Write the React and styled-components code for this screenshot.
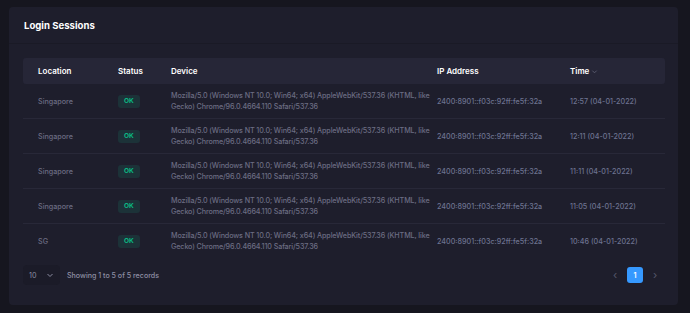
import React from "react";
import styled, { createGlobalStyle } from "styled-components";

const GlobalStyle = createGlobalStyle`
  html, body {
    margin: 0;
    padding: 0;
    background: #16161f;
  }
  body {
    font-family: Inter, "Open Sans", sans-serif;
    -webkit-font-smoothing: antialiased;
  }
`;

const sessions = [
  { location: "Singapore", time: "12:57 (04-01-2022)" },
  { location: "Singapore", time: "12:11 (04-01-2022)" },
  { location: "Singapore", time: "11:11 (04-01-2022)" },
  { location: "Singapore", time: "11:05 (04-01-2022)" },
  { location: "SG", time: "10:46 (04-01-2022)" },
];

const agent =
  "Mozilla/5.0 (Windows NT 10.0; Win64; x64) AppleWebKit/537.36 (KHTML, like Gecko) Chrome/96.0.4664.110 Safari/537.36";
const ip = "2400:8901::f03c:92ff:fe5f:32a";

export default function App() {
  return (
    <Page>
      <GlobalStyle />
      <Card>
        <CardHeader>
          <Title>Login Sessions</Title>
        </CardHeader>
        <CardBody>
          <Table>
            <colgroup>
              <col style={{ width: 95 }} />
              <col style={{ width: 53 }} />
              <col style={{ width: 266 }} />
              <col style={{ width: 133 }} />
              <col style={{ width: 95 }} />
            </colgroup>
            <thead>
              <tr>
                <Th>Location</Th>
                <Th>Status</Th>
                <Th>Device</Th>
                <Th>IP Address</Th>
                <Th>
                  Time <SortArrow viewBox="0 0 8 8">
                    <path d="M1.5 3 L4 5.5 L6.5 3" />
                  </SortArrow>
                </Th>
              </tr>
            </thead>
            <tbody>
              {sessions.map((s, i) => (
                <Row key={i}>
                  <Td>{s.location}</Td>
                  <Td>
                    <Badge>OK</Badge>
                  </Td>
                  <Td $device>{agent}</Td>
                  <Td $tone="blue">{ip}</Td>
                  <Td $tone="blue">{s.time}</Td>
                </Row>
              ))}
            </tbody>
          </Table>
          <Footer>
            <Left>
              <PageSize>
                <span>10</span>
                <Chevron viewBox="0 0 8 8">
                  <path d="M1.5 3 L4 5.5 L6.5 3" />
                </Chevron>
              </PageSize>
              <Info>Showing 1 to 5 of 5 records</Info>
            </Left>
            <Pager>
              <PageArrow>‹</PageArrow>
              <PageButton $active>1</PageButton>
              <PageArrow>›</PageArrow>
            </Pager>
          </Footer>
        </CardBody>
      </Card>
    </Page>
  );
}

const Page = styled.div`
  padding: 7px 12px 8px 9px;
`;

const Card = styled.div`
  background: #1e1e2c;
  border-radius: 4px;
`;

const CardHeader = styled.div`
  height: 36px;
  display: flex;
  align-items: center;
  padding: 0 15px;
  border-bottom: 1px solid #1a1a26;
`;

const Title = styled.h3`
  margin: 0;
  color: #ffffff;
  font-size: 9.6px;
  font-weight: 700;
`;

const CardBody = styled.div`
  padding: 14px 13px 20px 14px;
`;

const Table = styled.table`
  width: 642px;
  table-layout: fixed;
  border-collapse: collapse;
`;

const Th = styled.th`
  height: 26px;
  padding: 0 4px 0 0;
  background: #262637;
  color: #ffffff;
  font-size: 8px;
  font-weight: 600;
  text-align: left;
  white-space: nowrap;
  &:first-child {
    padding-left: 15px;
    border-radius: 3px 0 0 3px;
  }
  &:last-child {
    border-radius: 0 3px 3px 0;
  }
`;

const SortArrow = styled.svg`
  width: 7px;
  height: 7px;
  vertical-align: middle;
  fill: none;
  stroke: #5e5f74;
  stroke-width: 1;
`;

const Row = styled.tr`
  border-bottom: 1px solid #282838;
  &:last-child {
    border-bottom: none;
  }
`;

const Td = styled.td`
  height: 34px;
  padding: 0 ${(p) => (p.$device ? "0" : "4px")} 0 0;
  color: ${(p) => (p.$tone === "blue" ? "#6d7390" : "#6c6d83")};
  font-size: 7.2px;
  letter-spacing: ${(p) => (p.$device ? "-0.12px" : "0")};
  line-height: 11px;
  font-weight: 500;
  vertical-align: middle;
  &:first-child {
    padding-left: 15px;
  }
`;

const Badge = styled.span`
  display: inline-block;
  padding: 2px 6px;
  border-radius: 3px;
  background: #1c3238;
  color: #0bb783;
  font-size: 6.6px;
  font-weight: 700;
  line-height: 9px;
`;

const Footer = styled.div`
  display: flex;
  align-items: center;
  justify-content: space-between;
  margin-top: 7px;
`;

const Left = styled.div`
  display: flex;
  align-items: center;
  gap: 7px;
`;

const PageSize = styled.div`
  width: 37px;
  height: 20px;
  box-sizing: border-box;
  padding: 0 6px;
  display: flex;
  align-items: center;
  justify-content: space-between;
  background: #1b1b28;
  border-radius: 4px;
  color: #8a8ba0;
  font-size: 7.2px;
`;

const Chevron = styled.svg`
  width: 8px;
  height: 8px;
  fill: none;
  stroke: #8a8ba0;
  stroke-width: 1;
`;

const Info = styled.span`
  color: #8e8fa4;
  font-size: 7.1px;
  font-weight: 500;
`;

const Pager = styled.div`
  display: flex;
  align-items: center;
  gap: 4px;
  margin-right: 2px;
`;

const PageArrow = styled.span`
  width: 16px;
  text-align: center;
  color: #55566a;
  font-size: 11px;
`;

const PageButton = styled.span`
  width: 16px;
  height: 16px;
  display: flex;
  align-items: center;
  justify-content: center;
  border-radius: 3px;
  background: ${(p) => (p.$active ? "#3699ff" : "transparent")};
  color: #ffffff;
  font-size: 7.2px;
  font-weight: 600;
`;
